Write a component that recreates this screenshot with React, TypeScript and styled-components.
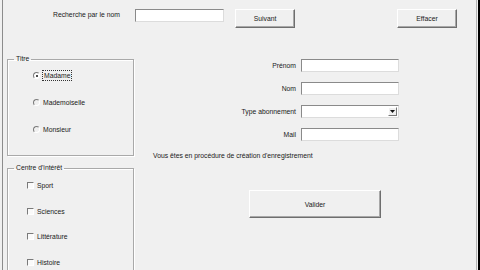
import React from "react";
import styled, { createGlobalStyle } from "styled-components";

/* Global */
/* ************************************************************************** */
const GlobalStyle = createGlobalStyle`
  html, body {
    margin: 0;
    padding: 0;
    background: #f0f0f0;
  }
  * {
    box-sizing: border-box;
  }
`;

/* Styled Components */
/* ************************************************************************** */
const Frame = styled.div`
  display: flex;
  width: 480px;
  height: 270px;
  overflow: hidden;
  background: #f0f0f0;
  padding-left: 2px;
  padding-right: 1px;
  border-right: 2px solid #000;
  font-family: "Liberation Sans", Arial, sans-serif;
  font-size: 6.8px;
  color: #1a1a1a;
`;

const Window = styled.div`
  flex: 1;
  display: flex;
  flex-direction: column;
  border-left: 1px solid #8c8c8c;
  border-right: 1px solid #b4b4b4;
`;

const TopBar = styled.div`
  display: flex;
  align-items: flex-start;
  height: 28px;
  padding-top: 9px;
`;

const SearchLabel = styled.span`
  width: 82px;
  margin-left: 50px;
  line-height: 12px;
`;

const TextBox = styled.div<{ $width?: number }>`
  width: ${(p) => p.$width ?? 98}px;
  height: 13px;
  background: #fff;
  border-top: 1px solid #8a8a8a;
  border-left: 1px solid #8a8a8a;
  border-right: 1px solid #dcdcdc;
  border-bottom: 1px solid #dcdcdc;
`;

const Button = styled.button<{ $width: number; $height: number; $gap?: number }>`
  width: ${(p) => p.$width}px;
  height: ${(p) => p.$height}px;
  margin-left: ${(p) => p.$gap ?? 0}px;
  padding: 0;
  background: #f0f0f0;
  border-top: 1px solid #fff;
  border-left: 1px solid #fff;
  border-right: 1px solid #6e6e6e;
  border-bottom: 1px solid #6e6e6e;
  box-shadow: inset -1px -1px 0 #a8a8a8;
  font-family: inherit;
  font-size: inherit;
  color: #1a1a1a;
`;

const Body = styled.div`
  flex: 1;
  display: flex;
  align-items: flex-start;
`;

const LeftColumn = styled.div`
  display: flex;
  flex-direction: column;
  width: 127px;
  margin-left: 4px;
  margin-top: 27px;
  gap: 8px;
`;

const GroupBox = styled.fieldset<{ $height: number }>`
  margin: 0;
  height: ${(p) => p.$height}px;
  padding: 0;
  border: 1px solid #a9a9a9;
  box-shadow: inset 1px 1px 0 #fff, 1px 1px 0 #fff;
`;

const Legend = styled.legend`
  margin-left: 6px;
  padding: 0 2px;
  line-height: 8px;
  font-size: 6.8px;
`;

const OptionList = styled.div<{ $gap: number; $pad: number; $top: number }>`
  display: flex;
  flex-direction: column;
  gap: ${(p) => p.$gap}px;
  padding: ${(p) => p.$top}px 0 0 ${(p) => p.$pad}px;
`;

const Option = styled.label`
  display: flex;
  align-items: center;
  height: 9px;
  gap: 3px;
`;

const RadioMark = styled.span<{ $checked?: boolean }>`
  position: relative;
  width: 7px;
  height: 7px;
  border-radius: 50%;
  border-top: 1px solid #7a7a7a;
  border-left: 1px solid #7a7a7a;
  border-right: 1px solid #fff;
  border-bottom: 1px solid #fff;
  background: ${(p) => (p.$checked ? "#fff" : "transparent")};

  &::after {
    content: "";
    display: ${(p) => (p.$checked ? "block" : "none")};
    position: absolute;
    left: 1.5px;
    top: 1.5px;
    width: 2px;
    height: 2px;
    border-radius: 50%;
    background: #111;
  }
`;

const CheckMark = styled.span`
  width: 7px;
  height: 7px;
  border-top: 1px solid #7a7a7a;
  border-left: 1px solid #7a7a7a;
  border-right: 1px solid #fff;
  border-bottom: 1px solid #fff;
  background: #fafafa;
`;

const FocusText = styled.span`
  outline: 1px dotted #333;
  padding: 0 1px;
  line-height: 9px;
`;

const RightColumn = styled.div`
  display: flex;
  flex-direction: column;
  margin-left: 19px;
  padding-top: 31px;
`;

const FieldGrid = styled.div`
  display: grid;
  grid-template-columns: 143px 98px;
  grid-auto-rows: 13px;
  column-gap: 5px;
  row-gap: 10px;
  align-items: center;
`;

const FieldLabel = styled.span`
  justify-self: end;
`;

const DropButton = styled.span`
  display: flex;
  align-items: center;
  justify-content: center;
  width: 9px;
  height: 9px;
  margin: 1px 1px 0 auto;
  background: #f0f0f0;
  border-top: 1px solid #fff;
  border-left: 1px solid #fff;
  border-right: 1px solid #777;
  border-bottom: 1px solid #777;
`;

const ComboBox = styled(TextBox)`
  display: flex;
`;

const Status = styled.div`
  margin-top: 11px;
  line-height: 8px;
`;

const ButtonRow = styled.div`
  display: flex;
  margin-top: 30px;
  padding-left: 96px;
`;

/* Component */
/* ************************************************************************** */
const titres = ["Madame", "Mademoiselle", "Monsieur"];
const interets = ["Sport", "Sciences", "Littérature", "Histoire"];

export default function App() {
  return (
    <>
      <GlobalStyle />
      <Frame>
        <Window>
          <TopBar>
            <SearchLabel>Recherche par le nom</SearchLabel>
            <TextBox $width={89} />
            <Button $width={60} $height={19} $gap={11}>
              Suivant
            </Button>
            <Button $width={60} $height={19} $gap={102}>
              Effacer
            </Button>
          </TopBar>

          <Body>
            <LeftColumn>
              <GroupBox $height={101}>
                <Legend>Titre</Legend>
                <OptionList $gap={18} $pad={25} $top={8}>
                  {titres.map((t, i) => (
                    <Option key={t}>
                      <RadioMark $checked={i === 0} />
                      {i === 0 ? <FocusText>{t}</FocusText> : <span>{t}</span>}
                    </Option>
                  ))}
                </OptionList>
              </GroupBox>

              <GroupBox $height={120}>
                <Legend>Centre d'intérêt</Legend>
                <OptionList $gap={16.5} $pad={19} $top={9}>
                  {interets.map((t) => (
                    <Option key={t}>
                      <CheckMark />
                      <span>{t}</span>
                    </Option>
                  ))}
                </OptionList>
              </GroupBox>
            </LeftColumn>

            <RightColumn>
              <FieldGrid>
                <FieldLabel>Prénom</FieldLabel>
                <TextBox />
                <FieldLabel>Nom</FieldLabel>
                <TextBox />
                <FieldLabel>Type abonnement</FieldLabel>
                <ComboBox>
                  <DropButton>
                    <svg width="5" height="3" viewBox="0 0 5 3">
                      <path d="M0 0h5L2.5 3z" fill="#111" />
                    </svg>
                  </DropButton>
                </ComboBox>
                <FieldLabel>Mail</FieldLabel>
                <TextBox />
              </FieldGrid>
              <Status>Vous êtes en procédure de création d'enregistrement</Status>
              <ButtonRow>
                <Button $width={132} $height={28}>
                  Valider
                </Button>
              </ButtonRow>
            </RightColumn>
          </Body>
        </Window>
      </Frame>
    </>
  );
}
